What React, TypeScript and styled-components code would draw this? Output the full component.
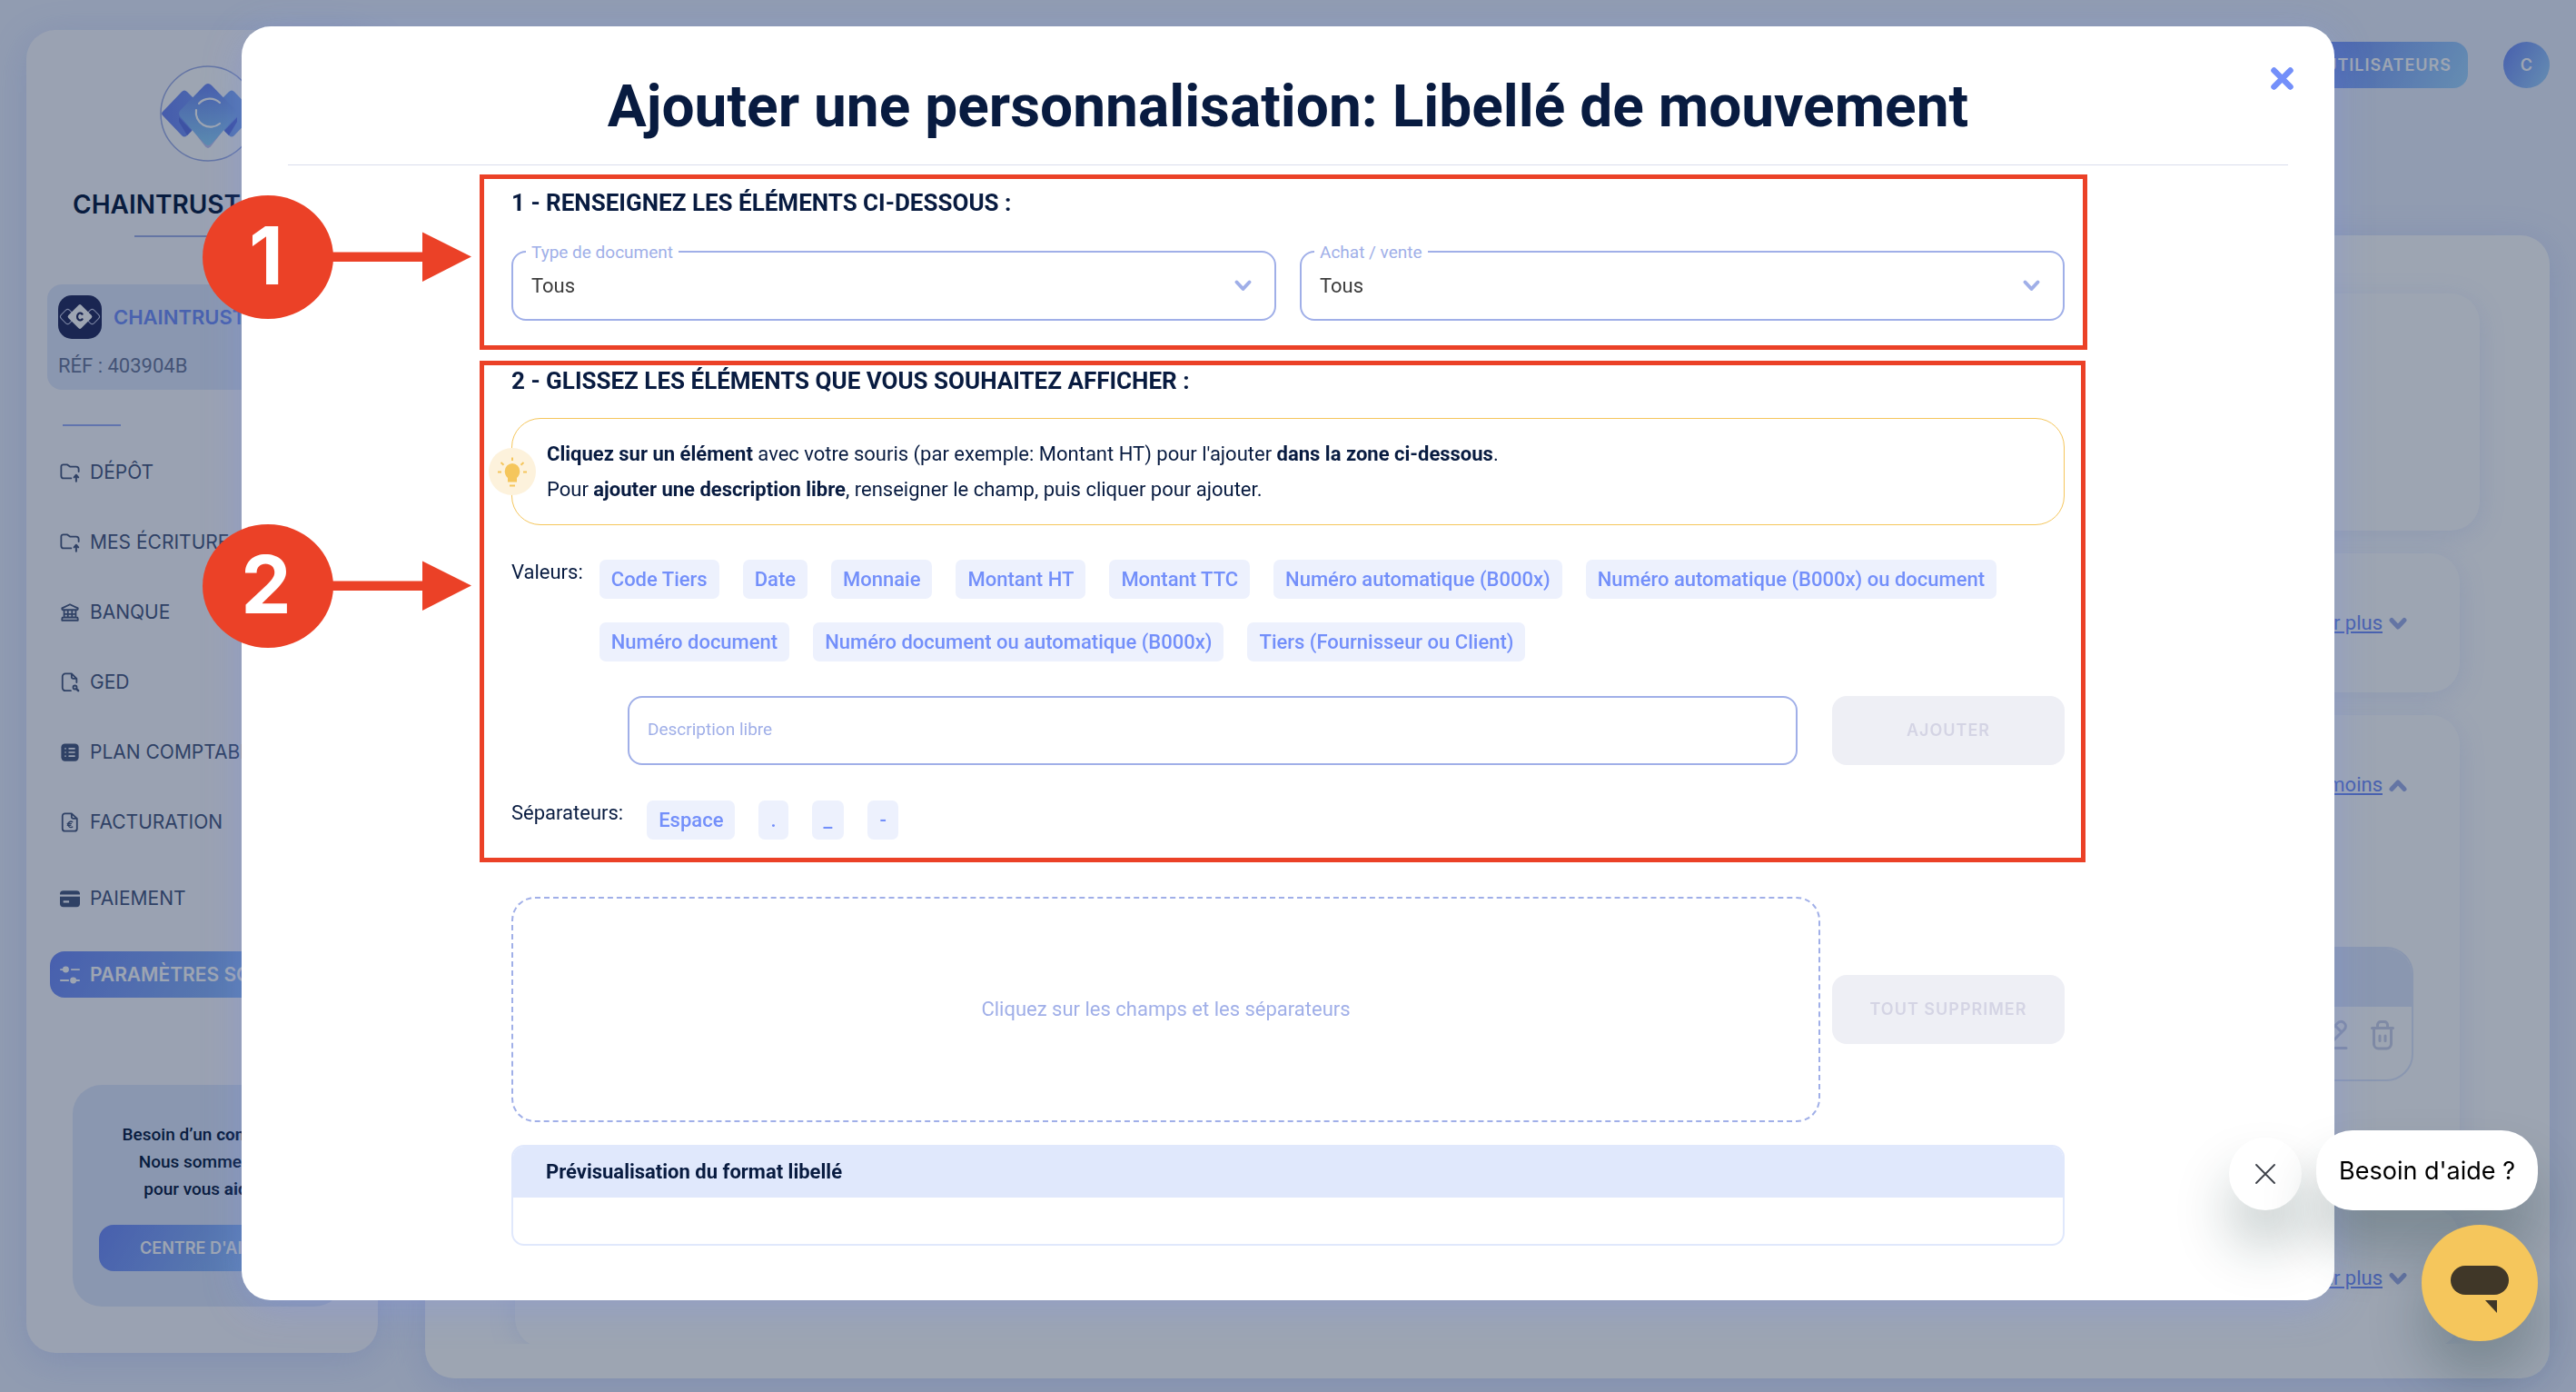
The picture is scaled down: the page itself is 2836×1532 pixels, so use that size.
import React from "react";
import styled, { createGlobalStyle, css } from "styled-components";

const color = {
  navy: "#081b40",
  primary: "#738ffa",
  muted: "#a0afe8",
  pale: "#e0e8fc",
  chip: "#edf1fd",
  red: "#eb4127",
  amber: "#f5c65c",
};

const headingFont = `Inter, "Liberation Sans", sans-serif`;
const gradient = "linear-gradient(120deg, #718bf8 0%, #a3d8ff 100%)";
const glow = "0 8px 40px rgba(115, 143, 250, 0.22)";

const GlobalStyle = createGlobalStyle`
  *, *::before, *::after { box-sizing: border-box; }
  body {
    margin: 0;
    background: #ebf0fd;
    color: ${color.navy};
    font-family: Roboto, "Liberation Sans", sans-serif;
    font-size: 22px;
    line-height: 28px;
  }
  button, input, select { font: inherit; margin: 0; }
  h1, h2, h3, p, ul { margin: 0; padding: 0; }
`;

/* ---------- application behind the dialog ---------- */

const Shell = styled.div`
  display: flex;
  gap: 52px;
  height: 100vh;
  padding-left: 29px;
  overflow: hidden;
`;

const Sidebar = styled.aside`
  flex: none;
  width: 387px;
  margin: 33px 0 43px;
  padding: 39px 10px 0 23px;
  border-radius: 32px;
  background: #fbfaff;
  box-shadow: ${glow};
`;

const Logo = styled.svg`
  display: block;
  width: 106px;
  height: 106px;
  margin: 0 auto;
`;

const CompanyName = styled.p`
  margin-top: 27px;
  padding-left: 28px;
  font: 600 28px/40px ${headingFont};
`;

const Rule = styled.hr<{ $short?: boolean }>`
  width: ${(p) => (p.$short ? "64px" : "162px")};
  height: 2px;
  margin: ${(p) => (p.$short ? "38px 0 0 17px" : "14px auto 0")};
  border: 0;
  background: ${(p) => (p.$short ? "#9badf8" : color.muted)};
`;

const Account = styled.div`
  height: 116px;
  margin-top: 52px;
  padding: 12px;
  border-radius: 16px;
  background: ${color.pale};
`;

const AccountRow = styled.div`
  display: flex;
  align-items: center;
  gap: 13px;
  color: ${color.primary};
  font: 600 22px/28px ${headingFont};
`;

const AccountRef = styled.p`
  margin-top: 16px;
  color: #6c789c;
`;

const Nav = styled.nav`
  display: flex;
  flex-direction: column;
  gap: 26px;
  margin: 25px 0 0 3px;
`;

const NavLink = styled.a<{ $active?: boolean; $spaced?: boolean }>`
  display: flex;
  align-items: center;
  gap: 11px;
  height: 51px;
  margin-top: ${(p) => (p.$spaced ? "7px" : "0")};
  padding: 0 11px;
  border-radius: 16px;
  color: #48597f;
  font: 400 21px/28px ${headingFont};
  text-decoration: none;
  white-space: nowrap;
  svg { flex: none; width: 22px; height: 22px; }
  ${(p) =>
    p.$active &&
    css`
      background: ${gradient};
      color: #fff;
      font-weight: 600;
    `}
`;

const HelpCard = styled.section`
  margin: 96px 28px 0;
  padding: 40px 29px 39px;
  border-radius: 32px;
  background: ${color.pale};
  font-size: 19px;
  font-weight: 500;
  line-height: 30px;
  text-align: center;
  white-space: nowrap;
`;

const GradientButton = styled.button`
  height: 51px;
  padding: 0 18px;
  border: 0;
  border-radius: 16px;
  background: ${gradient};
  color: #fff;
  font: 600 18px/28px ${headingFont};
`;

const HelpButton = styled(GradientButton)`
  width: 100%;
  margin-top: 24px;
  padding: 0 45px;
  text-align: left;
`;

const UsersButton = styled(GradientButton)`
  letter-spacing: 1px;
`;

const Content = styled.div`
  display: flex;
  flex: 1;
  flex-direction: column;
  min-width: 0;
  padding: 46px 29px 15px 0;
`;

const TopBar = styled.header`
  display: flex;
  flex: none;
  justify-content: flex-end;
  gap: 39px;
  height: 213px;
`;

const Avatar = styled(GradientButton)`
  width: 51px;
  padding: 0;
  border-radius: 50%;
`;

const Panel = styled.main`
  flex: 1;
  min-height: 0;
  padding-bottom: 38px;
  border-radius: 32px;
  background: #fff;
  box-shadow: ${glow};
`;

const Scroller = styled.div`
  display: flex;
  flex-direction: column;
  gap: 25px;
  height: 100%;
  padding: 64px 77px 0;
  overflow: hidden;
`;

const Card = styled.section<{ $h: number; $inset?: boolean }>`
  flex: none;
  height: ${(p) => p.$h}px;
  margin: 0 ${(p) => (p.$inset ? "22px" : "0")};
  padding: 63px 51px 0 60px;
  border-radius: 32px;
  background: #fff;
  box-shadow: 0 6px 30px rgba(115, 143, 250, 0.16);
`;

const Toggle = styled.button`
  display: flex;
  align-items: center;
  gap: 7px;
  margin: 0 7px 0 auto;
  padding: 0;
  border: 0;
  background: none;
  color: ${color.primary};
  text-decoration: underline;
  svg { width: 20px; height: 15px; color: ${color.muted}; }
`;

const DataTable = styled.table`
  width: 100%;
  margin-top: 164px;
  border: 2px solid ${color.pale};
  border-radius: 30px;
  border-spacing: 0;
  overflow: hidden;
  th { height: 64px; padding: 0; background: ${color.pale}; }
  td { height: 80px; padding: 0 18px 12px; text-align: right; }
`;

const IconButton = styled.button`
  margin-left: 24px;
  padding: 0;
  border: 0;
  background: none;
  color: #cdd2e9;
  svg { display: block; width: 28px; height: 34px; }
`;

/* ---------- dialog ---------- */

const Overlay = styled.div`
  position: fixed;
  inset: 0;
  display: flex;
  align-items: flex-start;
  justify-content: center;
  padding-top: 29px;
  background: rgba(10, 29, 62, 0.4);
`;

const Dialog = styled.div`
  position: relative;
  width: 100%;
  max-width: 2304px;
  padding: 0 51px 60px;
  border-radius: 32px;
  background: #fff;
  box-shadow: 0 8px 44px rgba(115, 143, 250, 0.3);
`;

const DialogHeader = styled.header`
  height: 153px;
  padding-top: 49px;
  border-bottom: 1px solid #d9deec;
  text-align: center;
  h1 { font-size: 64px; font-weight: 700; line-height: 80px; }
`;

const CloseButton = styled.button`
  position: absolute;
  top: 45px;
  right: 45px;
  padding: 0;
  border: 0;
  background: none;
  color: ${color.primary};
  svg { display: block; width: 25px; height: 25px; }
`;

const Form = styled.form`
  max-width: 1710px;
  margin: 26px auto 0;
`;

const Step = styled.section<{ $first?: boolean }>`
  position: relative;
  margin-top: ${(p) => (p.$first ? "0" : "51px")};
  h2 { font-size: 26px; font-weight: 700; line-height: 30px; }
`;

const Frame = styled.div<{ $edges: string }>`
  position: absolute;
  inset: ${(p) => p.$edges};
  border: 5px solid ${color.red};
  pointer-events: none;
`;

const Callout = styled.div<{ $top: number }>`
  position: absolute;
  top: ${(p) => p.$top}px;
  left: -340px;
  width: 296px;
  height: 136px;
  color: #fff;
  font: 700 88px/132px ${headingFont};
  svg { position: absolute; inset: 0; }
  span { position: relative; display: block; width: 140px; text-align: center; }
`;

const SelectRow = styled.div`
  display: grid;
  grid-template-columns: 1fr 1fr;
  gap: 26px;
  margin-top: 38px;
`;

const Field = styled.div`
  position: relative;
  label {
    position: absolute;
    top: -11px;
    left: 16px;
    padding: 0 6px;
    background: #fff;
    color: ${color.muted};
    font-size: 19px;
    line-height: 26px;
  }
  select {
    display: block;
    width: 100%;
    height: 77px;
    padding: 0 20px;
    border: 2px solid ${color.muted};
    border-radius: 16px;
    background: #fff;
    color: #3c3c3c;
    appearance: none;
  }
  svg {
    position: absolute;
    top: 31px;
    right: 26px;
    width: 21px;
    height: 15px;
    color: ${color.muted};
    pointer-events: none;
  }
`;

const Info = styled.div`
  position: relative;
  margin-top: 26px;
  padding: 19px 38px;
  border: 1px solid ${color.amber};
  border-radius: 32px;
  line-height: 39px;
`;

const Bulb = styled.svg`
  position: absolute;
  top: 32px;
  left: -26px;
  width: 52px;
  height: 52px;
`;

const ChipLine = styled.div<{ $wide?: boolean }>`
  display: flex;
  align-items: flex-start;
  gap: ${(p) => (p.$wide ? "26px" : "18px")};
  margin-top: ${(p) => (p.$wide ? "39px" : "38px")};
`;

const Chips = styled.div`
  display: flex;
  flex-wrap: wrap;
  gap: 26px;
`;

const Chip = styled.button`
  height: 43px;
  padding: 1px 13px 0;
  border: 0;
  border-radius: 7px;
  background: ${color.chip};
  color: ${color.primary};
  font-weight: 500;
`;

const FreeText = styled.div`
  display: flex;
  gap: 38px;
  margin: 38px 0 0 128px;
  input {
    flex: 1;
    min-width: 0;
    height: 76px;
    padding: 0 20px 3px;
    border: 2px solid ${color.muted};
    border-radius: 16px;
    background: #fff;
    font-size: 19px;
  }
  input::placeholder { color: ${color.muted}; opacity: 1; }
`;

const GreyButton = styled.button`
  flex: none;
  width: 256px;
  height: 76px;
  padding: 0;
  border: 0;
  border-radius: 16px;
  background: #eeeff5;
  color: #d4d4e4;
  font: 600 18px/28px ${headingFont};
  letter-spacing: 1px;
`;

const DropRow = styled.div`
  display: flex;
  align-items: center;
  gap: 13px;
  margin-top: 63px;
`;

const DropZone = styled.div`
  display: flex;
  flex: 1;
  align-items: center;
  justify-content: center;
  height: 248px;
  border: 2px dashed ${color.muted};
  border-radius: 26px;
  color: ${color.muted};
`;

const Preview = styled.section`
  height: 111px;
  margin-top: 25px;
  border: 2px solid ${color.pale};
  border-radius: 14px;
  h3 {
    padding: 14px 36px;
    border-radius: 12px 12px 0 0;
    background: ${color.pale};
    font-size: 22px;
    font-weight: 700;
    line-height: 28px;
  }
`;

/* ---------- chat launcher ---------- */

const Chat = styled.div`
  position: fixed;
  right: 42px;
  bottom: 56px;
  display: flex;
  flex-direction: column;
  align-items: flex-end;
  gap: 16px;
`;

const ChatRow = styled.div`
  display: flex;
  align-items: flex-end;
  gap: 16px;
`;

const ChatPiece = styled.button`
  padding: 0;
  border: 0;
  background: #fff;
  box-shadow: 0 40px 60px rgba(20, 50, 50, 0.25);
  svg { display: block; margin: 0 auto; }
`;

const ChatDismiss = styled(ChatPiece)`
  width: 80px;
  height: 80px;
  border-radius: 50%;
`;

const ChatText = styled(ChatPiece)`
  height: 88px;
  padding: 2px 25px 0;
  border-radius: 40px;
  color: #000;
  font: 400 27px/32px ${headingFont};
`;

const ChatLaunch = styled(ChatPiece)`
  width: 128px;
  height: 128px;
  padding-top: 14px;
  border-radius: 50%;
  background: ${color.amber};
`;

/* ---------- icons ---------- */

const Line = ({ children }: { children: React.ReactNode }) => (
  <svg viewBox="0 0 24 24" fill="none" stroke="currentColor" strokeWidth="2" strokeLinecap="round" strokeLinejoin="round" aria-hidden="true">
    {children}
  </svg>
);

const FolderUp = () => (
  <Line>
    <path d="M13.500 19H4.500A3 3 0 0 1 1.500 16V5A2.500 2.500 0 0 1 4 2.500H8.500L12 5H19.500A3 3 0 0 1 22.500 8V11" />
    <path d="M19.500 22.500V15.500M17 17.800L19.500 15L22 17.800" strokeWidth="2.200" />
  </Line>
);
const Bank = () => (
  <Line>
    <path d="M2.500 8V7L12 2.500L21.500 7V8A1 1 0 0 1 20.500 9H3.500A1 1 0 0 1 2.500 8ZM5 9V18M9.500 9V18M14.500 9V18M19 9V18M5 14H19M4 18H20A1.500 1.500 0 0 1 21.500 19.500V21.500H2.500V19.500A1.500 1.500 0 0 1 4 18Z" />
  </Line>
);
const FileSearch = () => (
  <Line>
    <path d="M13 22H6.500A3.500 3.500 0 0 1 3 18.500V5A3.500 3.500 0 0 1 6.500 1.500H14L20 7.500V12M14 2V5.500A2 2 0 0 0 16 7.500H19.500" />
    <circle cx="18" cy="18" r="2.200" />
    <path d="M20 20L22 22" strokeWidth="2.600" />
  </Line>
);
const ListIcon = () => (
  <svg viewBox="0 0 24 24" aria-hidden="true">
    <rect x="1.500" y="1.500" width="21" height="21" rx="4.500" fill="currentColor" />
    <g stroke="#fbfaff" strokeWidth="1.800" strokeLinecap="round">
      <path d="M6.500 7.500h.1M11 7.500h6.500M6.500 12h.1M11 12h6.500M6.500 16.500h.1M11 16.500h6.500" />
    </g>
  </svg>
);
const Invoice = () => (
  <Line>
    <path d="M14 1.500H6A3 3 0 0 0 3 4.500V19.500A3 3 0 0 0 6 22.500H17.500A3 3 0 0 0 20.500 19.500V7.500ZM14 2V5.500A2 2 0 0 0 16 7.500H20" />
    <path d="M15 11.500A3.500 3.500 0 1 0 15 17.500M9 13.500H13.500M9 15.500H13" strokeWidth="1.500" />
  </Line>
);
const CreditCard = () => (
  <svg viewBox="0 0 24 24" fill="currentColor" aria-hidden="true">
    <path d="M4 2.500H20A4 4 0 0 1 24 6V7H0V6A4 4 0 0 1 4 2.500ZM0 9.500H24V18A4 4 0 0 1 20 22H4A4 4 0 0 1 0 18ZM4 14.500V17H11V14.500Z" fillRule="evenodd" />
  </svg>
);
const Sliders = () => (
  <Line>
    <path d="M1 5.500H9M14 5.500H23M1 18.500H10M16 18.500H23" />
    <circle cx="7" cy="5.500" r="2.800" fill="currentColor" />
    <circle cx="16" cy="18.500" r="2.800" fill="currentColor" />
  </Line>
);

const Chevron = ({ up, weight = 5 }: { up?: boolean; weight?: number }) => (
  <svg viewBox="0 0 20 15" fill="none" stroke="currentColor" strokeWidth={weight} strokeLinecap="round" strokeLinejoin="round" aria-hidden="true">
    <path d={up ? "M3 11.500L10 4L17 11.500" : "M3 3.500L10 11L17 3.500"} />
  </svg>
);

const Pencil = () => (
  <svg viewBox="0 0 28 34" fill="none" stroke="currentColor" strokeWidth="3" strokeLinecap="round" strokeLinejoin="round" aria-hidden="true">
    <path d="M3 24V18L16.500 4A5 5 0 0 1 24 11L11 24ZM14 7L21 14M3 31.500H26" />
  </svg>
);
const Trash = () => (
  <svg viewBox="0 0 28 34" fill="none" stroke="currentColor" strokeWidth="3" strokeLinecap="round" strokeLinejoin="round" aria-hidden="true">
    <path d="M2.500 9.500H25.500M8.500 9V6A3.500 3.500 0 0 1 12 2.500H16A3.500 3.500 0 0 1 19.500 6V9M4.500 10V27A5 5 0 0 0 9.500 32H18.500A5 5 0 0 0 23.500 27V10M11 18V23.500M17 18V23.500" />
  </svg>
);

const BrandLogo = () => (
  <Logo viewBox="0 0 106 106" role="img" aria-label="Chaintrust">
    <defs>
      <linearGradient id="core" gradientUnits="userSpaceOnUse" x1="53" y1="20" x2="53" y2="90">
        <stop offset="0" stopColor="#7189f5" />
        <stop offset="1" stopColor="#93d6fb" />
      </linearGradient>
      <linearGradient id="side" gradientUnits="userSpaceOnUse" x1="2" y1="53" x2="104" y2="53">
        <stop offset="0" stopColor="#6f86f6" />
        <stop offset="1" stopColor="#85b4fb" />
      </linearGradient>
    </defs>
    <circle cx="53" cy="53" r="52" fill="#fff" stroke={color.muted} strokeWidth="1.500" />
    <path d="M3 51Q1 53 3 55L24 77Q27 80 30 77L47 60V46L30 29Q27 26 24 29Z" fill="url(#side)" />
    <path d="M103 51Q105 53 103 55L82 77Q79 80 76 77L59 60V46L76 29Q79 26 82 29Z" fill="url(#side)" />
    <path d="M21 57V62L30 77L35 72ZM85 57V62L76 77L71 72Z" fill="#5f76e6" />
    <path d="M24 56L49 88Q53 94 57 88L82 56Z" fill="#c3c4f5" />
    <path d="M22 50Q20 53 22 56L49 86Q53 90 57 86L84 56Q86 53 84 50L57 22Q53 18 49 22Z" fill="url(#core)" />
    <path d="M43 42A16 16 0 0 1 66 41M40 49A16 16 0 0 0 66 64" fill="none" stroke="#fff" strokeWidth="2.200" strokeLinecap="round" />
  </Logo>
);

const AccountIcon = () => (
  <svg width="48" height="48" viewBox="0 0 48 48" aria-hidden="true">
    <rect width="48" height="48" rx="15" fill="#262c5f" />
    <g fill="none" stroke="#c5c9e6" strokeWidth="1">
      <rect x="4" y="17" width="13" height="13" rx="3" transform="rotate(45 10.500 23.500)" />
      <rect x="31" y="17" width="13" height="13" rx="3" transform="rotate(45 37.500 23.500)" />
    </g>
    <rect x="14" y="13.500" width="20" height="20" rx="2" transform="rotate(45 24 23.500)" fill="#fff" />
    <path d="M27 21.500A3.200 4 0 1 0 27 25.500" fill="none" stroke="#262c5f" strokeWidth="2.200" />
  </svg>
);

const Marker = ({ n, top }: { n: number; top: number }) => (
  <Callout $top={top}>
    <svg width="296" height="136" viewBox="0 0 296 136" fill={color.red} aria-hidden="true">
      <ellipse cx="72" cy="68" rx="72" ry="68" />
      <path d="M140 62.500H242V40.500L296 67.500L242 95V73H140Z" />
    </svg>
    <span>{n}</span>
  </Callout>
);

const navItems = [
  { label: "DÉPÔT", Icon: FolderUp },
  { label: "MES ÉCRITURES", Icon: FolderUp },
  { label: "BANQUE", Icon: Bank },
  { label: "GED", Icon: FileSearch },
  { label: "PLAN COMPTABLE", Icon: ListIcon },
  { label: "FACTURATION", Icon: Invoice },
  { label: "PAIEMENT", Icon: CreditCard, spaced: true },
  { label: "PARAMÈTRES SOCIÉTÉ", Icon: Sliders, spaced: true, active: true },
];

const values = [
  "Code Tiers",
  "Date",
  "Monnaie",
  "Montant HT",
  "Montant TTC",
  "Numéro automatique (B000x)",
  "Numéro automatique (B000x) ou document",
  "Numéro document",
  "Numéro document ou automatique (B000x)",
  "Tiers (Fournisseur ou Client)",
];

const separators = ["Espace", ".", "_", "-"];

const SelectField = ({ id, label }: { id: string; label: string }) => (
  <Field>
    <select id={id} defaultValue="Tous">
      <option>Tous</option>
    </select>
    <label htmlFor={id}>{label}</label>
    <Chevron weight={4} />
  </Field>
);

export default function App() {
  return (
    <>
      <GlobalStyle />
      <Shell>
        <Sidebar>
          <BrandLogo />
          <CompanyName>CHAINTRUST</CompanyName>
          <Rule />
          <Account>
            <AccountRow>
              <AccountIcon />
              CHAINTRUST
            </AccountRow>
            <AccountRef>RÉF : 403904B</AccountRef>
          </Account>
          <Rule $short />
          <Nav>
            {navItems.map(({ label, Icon, spaced, active }) => (
              <NavLink key={label} href="#" $spaced={spaced} $active={active}>
                <Icon />
                {label}
              </NavLink>
            ))}
          </Nav>
          <HelpCard>
            <p>
              Besoin d’un <b>conseils ?</b>
            </p>
            <p>Nous sommes là !</p>
            <p>
              pour vous <b>aider !</b>
            </p>
            <HelpButton type="button">CENTRE D'AIDE</HelpButton>
          </HelpCard>
        </Sidebar>
        <Content>
          <TopBar>
            <UsersButton type="button">UTILISATEURS</UsersButton>
            <Avatar type="button">C</Avatar>
          </TopBar>
          <Panel>
            <Scroller>
              <Card $h={261} />
              <Card $h={153} $inset>
                <Toggle type="button">
                  Voir plus <Chevron />
                </Toggle>
              </Card>
              <Card $h={518} $inset>
                <Toggle type="button">
                  Voir moins <Chevron up />
                </Toggle>
                <DataTable>
                  <thead>
                    <tr>
                      <th aria-label="Actions" />
                    </tr>
                  </thead>
                  <tbody>
                    <tr>
                      <td>
                        <IconButton type="button" aria-label="Modifier">
                          <Pencil />
                        </IconButton>
                        <IconButton type="button" aria-label="Supprimer">
                          <Trash />
                        </IconButton>
                      </td>
                    </tr>
                  </tbody>
                </DataTable>
              </Card>
              <Card $h={153} $inset>
                <Toggle type="button">
                  Voir plus <Chevron />
                </Toggle>
              </Card>
            </Scroller>
          </Panel>
        </Content>
      </Shell>

      <Overlay>
        <Dialog role="dialog" aria-modal="true" aria-labelledby="dialog-title">
          <DialogHeader>
            <h1 id="dialog-title">Ajouter une personnalisation: Libellé de mouvement</h1>
          </DialogHeader>
          <CloseButton type="button" aria-label="Fermer">
            <svg viewBox="0 0 25 25" stroke="currentColor" strokeWidth="6.500" strokeLinecap="round">
              <path d="M3.500 3.500L21.500 21.500M21.500 3.500L3.500 21.500" />
            </svg>
          </CloseButton>

          <Form>
            <Step $first>
              <h2>1 - RENSEIGNEZ LES ÉLÉMENTS CI-DESSOUS :</h2>
              <SelectRow>
                <SelectField id="doc-type" label="Type de document" />
                <SelectField id="direction" label="Achat / vente" />
              </SelectRow>
              <Frame $edges="-16px -25px -32px -35px" />
              <Marker n={1} top={7} />
            </Step>

            <Step>
              <h2>2 - GLISSEZ LES ÉLÉMENTS QUE VOUS SOUHAITEZ AFFICHER :</h2>
              <Info>
                <p>
                  <b>Cliquez sur un élément</b> avec votre souris (par exemple: Montant HT) pour l'ajouter{" "}
                  <b>dans la zone ci-dessous</b>.
                </p>
                <p>
                  Pour <b>ajouter une description libre</b>, renseigner le champ, puis cliquer pour ajouter.
                </p>
                <Bulb viewBox="0 0 52 52" aria-hidden="true">
                  <circle cx="26" cy="26" r="26" fill="#fdf2dc" />
                  <path d="M21 37.500V33C19 31 17.700 28.500 17.700 25.500A8.300 8.600 0 0 1 34.300 25.500C34.300 28.500 33 31 31 33V37.500Z" fill={color.amber} />
                  <path d="M23 41.500H29M26 10.500V14M13.500 16L16.500 18.700M38.500 16L35.500 18.700M10 26.500H14M38 26.500H42" fill="none" stroke={color.amber} strokeWidth="2" />
                </Bulb>
              </Info>
              <ChipLine>
                <span>Valeurs:</span>
                <Chips>
                  {values.map((v) => (
                    <Chip key={v} type="button">
                      {v}
                    </Chip>
                  ))}
                </Chips>
              </ChipLine>
              <FreeText>
                <input type="text" placeholder="Description libre" aria-label="Description libre" />
                <GreyButton type="button" disabled>
                  AJOUTER
                </GreyButton>
              </FreeText>
              <ChipLine $wide>
                <span>Séparateurs:</span>
                <Chips>
                  {separators.map((s) => (
                    <Chip key={s} type="button">
                      {s}
                    </Chip>
                  ))}
                </Chips>
              </ChipLine>
              <Frame $edges="-7px -23px -25px -35px" />
              <Marker n={2} top={173} />
            </Step>

            <DropRow>
              <DropZone>Cliquez sur les champs et les séparateurs</DropZone>
              <GreyButton type="button" disabled>
                TOUT SUPPRIMER
              </GreyButton>
            </DropRow>

            <Preview>
              <h3>Prévisualisation du format libellé</h3>
            </Preview>
          </Form>
        </Dialog>
      </Overlay>

      <Chat>
        <ChatRow>
          <ChatDismiss type="button" aria-label="Masquer le message">
            <svg width="22" height="22" viewBox="0 0 22 22" stroke="#3c4048" strokeWidth="1.800" strokeLinecap="round">
              <path d="M1 1L21 21M21 1L1 21" />
            </svg>
          </ChatDismiss>
          <ChatText type="button">Besoin d'aide ?</ChatText>
        </ChatRow>
        <ChatLaunch type="button" aria-label="Ouvrir le chat">
          <svg width="66" height="54" viewBox="0 0 66 54" fill="#403728">
            <rect x="1" y="1" width="64" height="32" rx="16" />
            <path d="M39 39H52V53Z" />
          </svg>
        </ChatLaunch>
      </Chat>
    </>
  );
}
